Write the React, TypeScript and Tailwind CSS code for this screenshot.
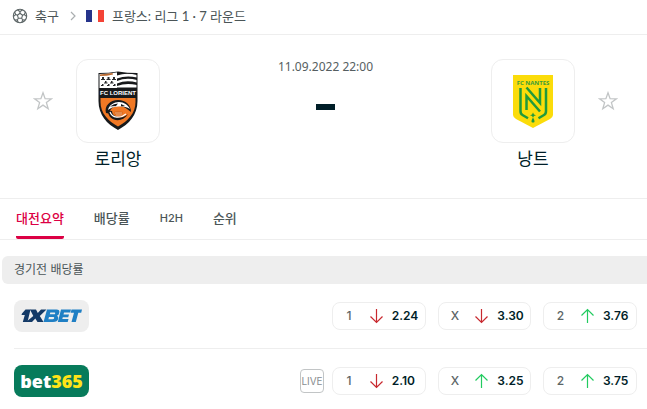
import { useState } from "react";

type Trend = "up" | "down";
type Odd = { label: string; value: string; trend: Trend };

function BallIcon() {
  return (
    <svg viewBox="0 0 16 16" className="size-4 shrink-0" fill="none" stroke="#5c6566" strokeWidth="1.1" strokeLinejoin="round" aria-hidden="true">
      <circle cx="8" cy="8" r="6.7" />
      <path d="M8 5.3 10.6 7.2 9.6 10.3H6.4L5.4 7.2Z" />
      <path d="M8 5.3V3.6M10.6 7.2l1.7-.6M9.6 10.3l1 1.5M6.4 10.3l-1 1.5M5.4 7.2l-1.700-.6" />
      <path d="M5.4 2.1 8 3.6l2.6-1.5M13.3 4.3l-1 2.3 2.1 1.8M13 12.1l-2.4-.3-.6 2.4M6 14.2l-.6-2.4-2.400.3M1.6 8.4l2.1-1.8-1-2.3" />
    </svg>
  );
}

function FrenchFlag() {
  return (
    <svg viewBox="0 0 18 12" className="h-3 w-[18px] shrink-0" aria-hidden="true">
      <rect width="6" height="12" fill="#26348b" />
      <rect x="6" width="6" height="12" fill="#fff" />
      <rect x="12" width="6" height="12" fill="#f44336" />
    </svg>
  );
}

function StarButton({ team }: { team: string }) {
  return (
    <button type="button" aria-label={team} className="mt-8 size-5 shrink-0">
      <svg viewBox="0 0 20 20" className="size-5" fill="none" stroke="#c2c5c6" strokeWidth="1.3">
        <path d="M10 1.8 12.1 7.7 18.4 7.8 13.4 11.6 15.2 17.7 10 14.1 4.8 17.7 6.6 11.6 1.6 7.8 7.9 7.7Z" />
      </svg>
    </button>
  );
}

function LorientCrest() {
  return (
    <svg viewBox="0 0 42 60" className="h-[60px] w-[42px]" aria-hidden="true">
      <defs>
        <clipPath id="lorient-shield">
          <path d="M2.500 3Q12 3 21 1.200 30 3 39.500 3V30C39.500 43 31 52 21 57.500 11 52 2.500 43 2.500 30Z" />
        </clipPath>
      </defs>
      <path d="M1.500 2Q12 2 21 .5 30 2 40.500 2V30C40.500 44 32 53 21 59 10 53 1.500 44 1.500 30Z" fill="#17191b" />
      <g clipPath="url(#lorient-shield)">
        <rect x="2" y="1" width="18" height="16" fill="#fff" />
        <path d="M3 3.500Q10 3 15 .5L16 3.500Q10 5 3 5Z" fill="#b9692f" />
        <path d="M5 6h2v2h1v1H4V8h1zM10.500 6h2v2h1v1h-4V8h1zM16 6h2v2h1v1h-4V8h1zM8 10h1.500v1.500h1v1H7v-1h1zM14 10h1.500v1.500h1v1H13v-1h1zM5 13h1.500v2H4v-1h1zM11 13h1.500v2H10v-1h1zM17 13h1.500v2H16v-1h1z" fill="#292b2c" />
        <path d="M20 4.500Q29 1.500 40 4V6.500Q29 4 20 7.500ZM20 10Q29 6 40 9V11.500Q29 8.500 20 12.500ZM20 15Q29 11.500 40 14V16.500H20Z" fill="#fff" />
        <path d="M3.500 27H38.500V31C38.500 42 31 50 21 55.500 11 50 3.500 42 3.500 31Z" fill="#f07824" />
        <path d="M9 42C7 35 13 29 21 29c8 0 13 5 13 12l-4-3c-4-4-13-4-16 0-1 2-1 3 0 5Z" fill="#17191b" />
        <path d="M11 39c1-5 6-8 11-8 5 0 9 3 11 7-3-2-6-2.500-10-2.500-5 0-8 .5-12 3.500Z" fill="#fff" />
        <path d="M13 35.500q4-3 8-3l-2 2.500zM24 33l4 2-4 .3z" fill="#17191b" />
        <path d="M11 40c0 10 14 13 20 3-3 3-7 4-11 3-3-1-5-3-5-6" fill="#17191b" />
        <path d="M13 41c2 6 10 7 16 2" fill="none" stroke="#fff" strokeWidth="1.2" />
        <path d="M17 41q4-2 9 0l-1 4q-4 1-7-1Z" fill="#d96c22" />
        <path d="M18 42h7M19 44h6" stroke="#fbd4b5" strokeWidth=".6" />
      </g>
      <text x="21" y="24" textAnchor="middle" fontSize="6" fontWeight="700" fill="#fff" className="font-['Liberation_Sans',sans-serif]">FC LORIENT</text>
    </svg>
  );
}

function NantesCrest() {
  return (
    <svg viewBox="0 0 40 54" className="h-[54px] w-10" aria-hidden="true">
      <path d="M0 1H40V41Q40 43 37 45L20 54 3 45Q0 43 0 41Z" fill="#fbdc0a" />
      <text x="20" y="11" textAnchor="middle" fontSize="6" fontWeight="700" fill="#3b9c3a" className="font-['Open_Sans',sans-serif]">FC NANTES</text>
      <path d="M7.500 14V37Q7.500 40 9.500 41L15 44.300M33 14V37Q33 40 31 41L25.500 44.300" fill="none" stroke="#219a3c" strokeWidth="2.500" />
      <path d="M13.500 36V22L27 37.500M13.500 13.500 27 29V14" fill="none" stroke="#219a3c" strokeWidth="2.500" />
      <path d="M20 38.500l1 2 2 .8-2 .8-1 1.700-1-1.700-2-.8 2-.8ZM20 43.500q2 3 1.500 4.500-1.500 1-3 0-.5-1.500 1.500-4.500Z" fill="#219a3c" />
    </svg>
  );
}

function Team({ name, children }: { name: string; children: React.ReactNode }) {
  return (
    <div className="flex w-[84px] flex-col items-center">
      <div className="flex size-[84px] items-center justify-center rounded-xl border border-[#eeeeee] bg-white">{children}</div>
      <h2 className="mt-1 text-[17px] leading-6 text-[#001e28]">{name}</h2>
    </div>
  );
}

function OneXBetLogo() {
  return (
    <a href="#1xbet" aria-label="1XBET" className="flex h-8 w-[75px] items-center justify-center rounded-lg bg-[#eeeeee]">
      <svg viewBox="0 0 61 14" className="h-3.5 w-[61px]" aria-hidden="true">
        <path d="M1 4.500 4.500 .5H9.500L6.500 13H1.800L3.800 6H.5Z" fill="#143a67" />
        <path d="M9 .5H15L16.800 4 20 .5H25.500L18.800 7 22.500 13H16.500L14.300 9.500 11 13H5L12.300 7Z" fill="#143a67" />
        <path fillRule="evenodd" d="M26 .5H35.500Q39 .5 38.300 3.700 37.800 6 36 6.700 37.800 7.500 37.200 9.800 36.500 13 32 13H22.500ZM29.300 3.500 28.800 5.300H33Q34 5.300 34.200 4.400 34.400 3.500 33.500 3.500ZM28 8 27.400 10.200H31.500Q33 10.200 33.200 9 33.400 8 32.300 8Z" fill="#1f7fc4" />
        <path d="M40 .5H50L49.200 3.600H43L42.500 5.400H48L47.200 8.300H41.800L41.300 10H47.500L46.700 13H36.800ZM50.500 .5H61L60.200 3.700H57.300L54.800 13H50.500L53 3.700H49.700Z" fill="#1f7fc4" />
      </svg>
    </a>
  );
}

function Bet365Logo() {
  return (
    <a href="#bet365" className="flex h-8 w-[75px] items-center justify-center rounded-lg bg-[#077b5b] font-['Open_Sans',sans-serif] text-[18px] leading-8 font-extrabold text-white">
      bet<span className="text-[#ffe418]">365</span>
    </a>
  );
}

function TrendArrow({ trend }: { trend: Trend }) {
  return trend === "down" ? (
    <svg viewBox="0 0 15 16" className="h-4 w-[15px]" fill="none" stroke="#c8292f" strokeWidth="1.2" role="img" aria-label="down">
      <path d="M7.500 1V14.500M1.500 8.500 7.500 14.500 13.500 8.500" />
    </svg>
  ) : (
    <svg viewBox="0 0 15 16" className="h-4 w-[15px]" fill="none" stroke="#22cb60" strokeWidth="1.2" role="img" aria-label="up">
      <path d="M7.500 15V1.500M1.500 7.500 7.500 1.500 13.500 7.500" />
    </svg>
  );
}

function OddsRow({ logo, odds, live = false }: { logo: React.ReactNode; odds: Odd[]; live?: boolean }) {
  return (
    <li className="flex h-16 items-center">
      {logo}
      {live && <span className="ml-auto flex size-6 items-center justify-center rounded-sm border border-[#c2c5c6] text-[10px] text-[#888e90]">LIVE</span>}
      <div className={live ? "ml-2 grid w-[305px] grid-cols-3 gap-3" : "ml-auto grid w-[305px] grid-cols-3 gap-3"}>
        {odds.map((odd) => (
          <button key={odd.label} type="button" className="flex h-7 items-center justify-between rounded-lg border border-[#eeeeee] pr-[5px] pl-3 text-xs">
            <span className="w-2 text-center font-medium text-[#5c6566]">{odd.label}</span>
            <span className="flex items-center gap-2">
              <TrendArrow trend={odd.trend} />
              <span className="w-7 text-left font-semibold text-[#001e28]">{odd.value}</span>
            </span>
          </button>
        ))}
      </div>
    </li>
  );
}

const tabs = [
  { id: "summary", label: "대전요약", size: "text-[13px]" },
  { id: "odds", label: "배당률", size: "text-[13px]" },
  { id: "h2h", label: "H2H", size: "text-[11px]" },
  { id: "standings", label: "순위", size: "text-[13px]" },
];

export default function App() {
  const [active, setActive] = useState("summary");
  return (
    <main className="min-h-screen overflow-hidden bg-white font-[Inter,'Noto_Sans_CJK_KR',sans-serif] text-[#4b5557]">
      <nav className="flex h-[35px] items-center border-b border-[#eeeeee] pb-0.5 pl-3 font-[Lato,'Noto_Sans_CJK_KR',sans-serif] text-[13px] leading-5">
        <BallIcon />
        <a href="#soccer" className="ml-[7px]">축구</a>
        <svg viewBox="0 0 6 10" className="mr-2.5 ml-[11px] h-2.5 w-1.5" fill="none" stroke="#aaaeb0" strokeWidth="1.2" aria-hidden="true">
          <path d="M1 1 5 5 1 9" />
        </svg>
        <FrenchFlag />
        <a href="#ligue-1" className="ml-2">프랑스: 리그 1 · 7 라운드</a>
      </nav>

      <section className="flex h-[164px] items-start border-b border-[#eeeeee] pt-6 pr-[29px] pl-[33px]">
        <StarButton team="로리앙" />
        <div className="ml-[23px]">
          <Team name="로리앙"><LorientCrest /></Team>
        </div>
        <div className="flex flex-1 flex-col items-center">
          <time dateTime="2022-09-11T22:00" className="font-['Noto_Sans',sans-serif] text-xs leading-4 text-[#555e61]">11.09.2022 22:00</time>
          <div className="mt-[29px] h-1.5 w-[19px] bg-[#001e28]" />
        </div>
        <div className="mr-[23px]">
          <Team name="낭트"><NantesCrest /></Team>
        </div>
        <StarButton team="낭트" />
      </section>

      <div role="tablist" className="flex h-[41px] gap-[30px] border-b border-[#eeeeee] px-4">
        {tabs.map((tab) => (
          <button
            key={tab.id}
            type="button"
            role="tab"
            aria-selected={active === tab.id}
            onClick={() => setActive(tab.id)}
            className={`${tab.size} border-b-3 pt-0.5 font-medium ${active === tab.id ? "rounded-b-xs border-[#dc0044] text-[#dc0044]" : "border-transparent"}`}
          >
            {tab.label}
          </button>
        ))}
      </div>

      <section>
        <h3 className="mt-4 ml-0.5 flex h-7 items-center rounded-l-md bg-[#eeeeee] pl-3 text-xs">경기전 배당률</h3>
        <ul className="mr-2.5 ml-3.5">
          <OddsRow
            logo={<OneXBetLogo />}
            odds={[
              { label: "1", value: "2.24", trend: "down" },
              { label: "X", value: "3.30", trend: "down" },
              { label: "2", value: "3.76", trend: "up" },
            ]}
          />
          <li role="separator" className="-mr-2.5 h-px bg-[#eeeeee]" />
          <OddsRow
            live
            logo={<Bet365Logo />}
            odds={[
              { label: "1", value: "2.10", trend: "down" },
              { label: "X", value: "3.25", trend: "up" },
              { label: "2", value: "3.75", trend: "up" },
            ]}
          />
        </ul>
      </section>
    </main>
  );
}
